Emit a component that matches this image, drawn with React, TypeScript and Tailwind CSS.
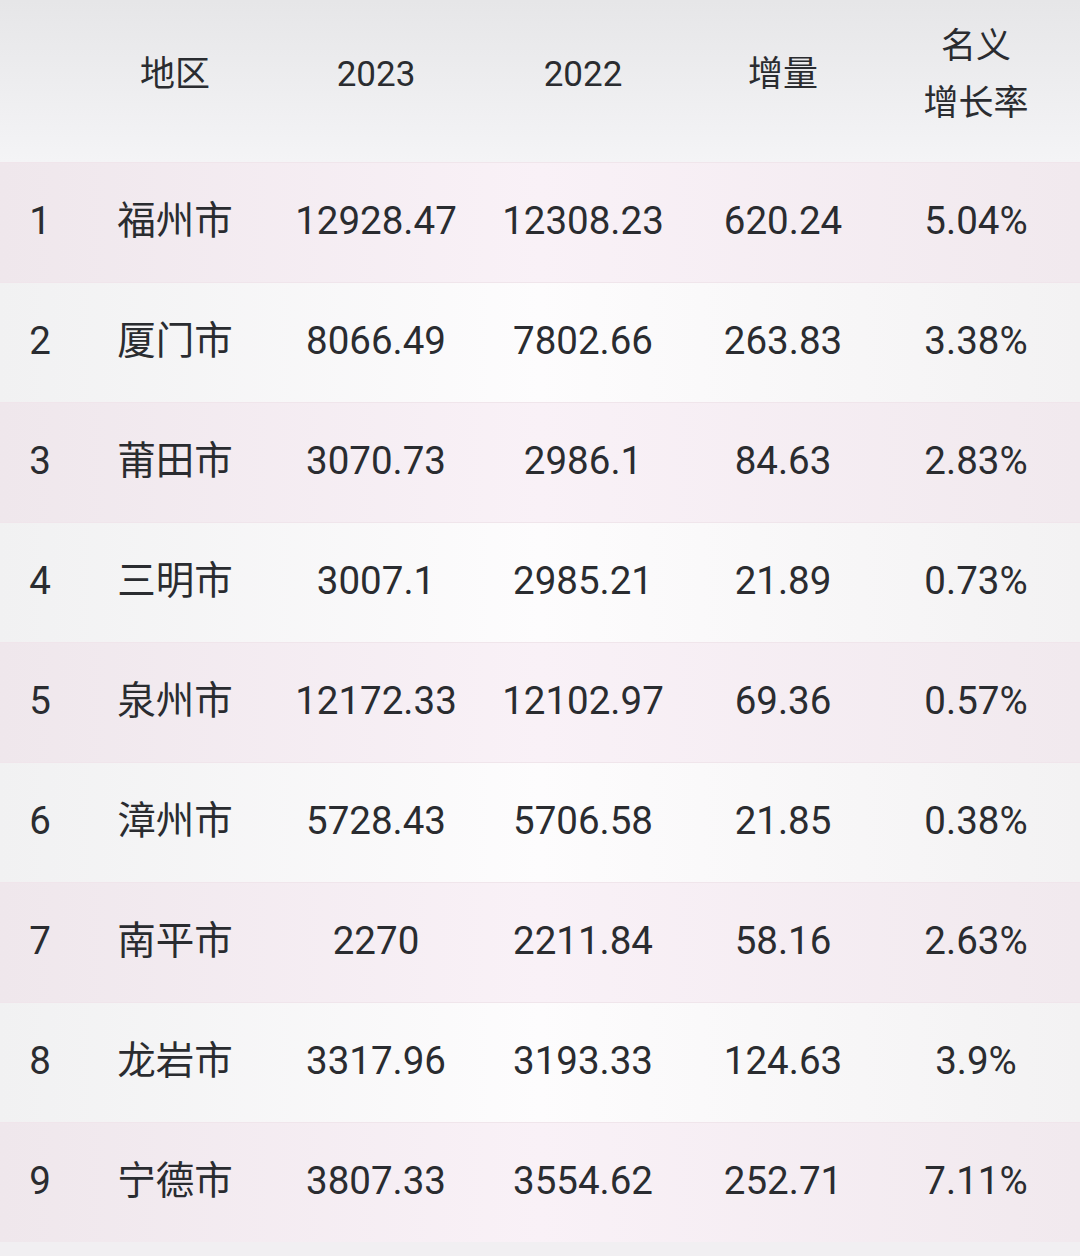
const rows = [
  ["1", "福州市", "12928.47", "12308.23", "620.24", "5.04%"],
  ["2", "厦门市", "8066.49", "7802.66", "263.83", "3.38%"],
  ["3", "莆田市", "3070.73", "2986.1", "84.63", "2.83%"],
  ["4", "三明市", "3007.1", "2985.21", "21.89", "0.73%"],
  ["5", "泉州市", "12172.33", "12102.97", "69.36", "0.57%"],
  ["6", "漳州市", "5728.43", "5706.58", "21.85", "0.38%"],
  ["7", "南平市", "2270", "2211.84", "58.16", "2.63%"],
  ["8", "龙岩市", "3317.96", "3193.33", "124.63", "3.9%"],
  ["9", "宁德市", "3807.33", "3554.62", "252.71", "7.11%"],
];

const cols = "grid grid-cols-[80px_190px_212px_202px_198px_188px]";

export default function App() {
  return (
    <div
      className="w-[1080px] h-[1256px] overflow-hidden bg-[#f1eff2] text-[#2a2c30]"
      style={{ fontFamily: 'Roboto, "Noto Sans CJK SC", sans-serif' }}
    >
      <div className={`${cols} h-[162px] pb-[12px] items-center text-[35px] bg-gradient-to-b from-[#e6e6e8] to-[#f4f4f6]`}>
        <div />
        <div className="text-center">地区</div>
        <div className="text-center">2023</div>
        <div className="text-center">2022</div>
        <div className="text-center">增量</div>
        <div className="text-center leading-[57px]">
          名义
          <br />
          增长率
        </div>
      </div>
      {rows.map((r, i) => (
        <div
          key={r[0]}
          className={`${cols} h-[120px] pb-[4px] items-center text-[38.5px] border-t border-[#f0e5eb] ${
            i % 2 === 0
              ? "bg-gradient-to-r from-[#efe7ec] via-[#f9f1f7] to-[#f1e9ee]"
              : "bg-gradient-to-r from-[#f1f1f2] via-[#fdfcfd] to-[#f3f2f3]"
          }`}
        >
          <div className="text-center">{r[0]}</div>
          <div className="text-center">{r[1]}</div>
          <div className="text-center">{r[2]}</div>
          <div className="text-center">{r[3]}</div>
          <div className="text-center">{r[4]}</div>
          <div className="text-center">{r[5]}</div>
        </div>
      ))}
    </div>
  );
}
